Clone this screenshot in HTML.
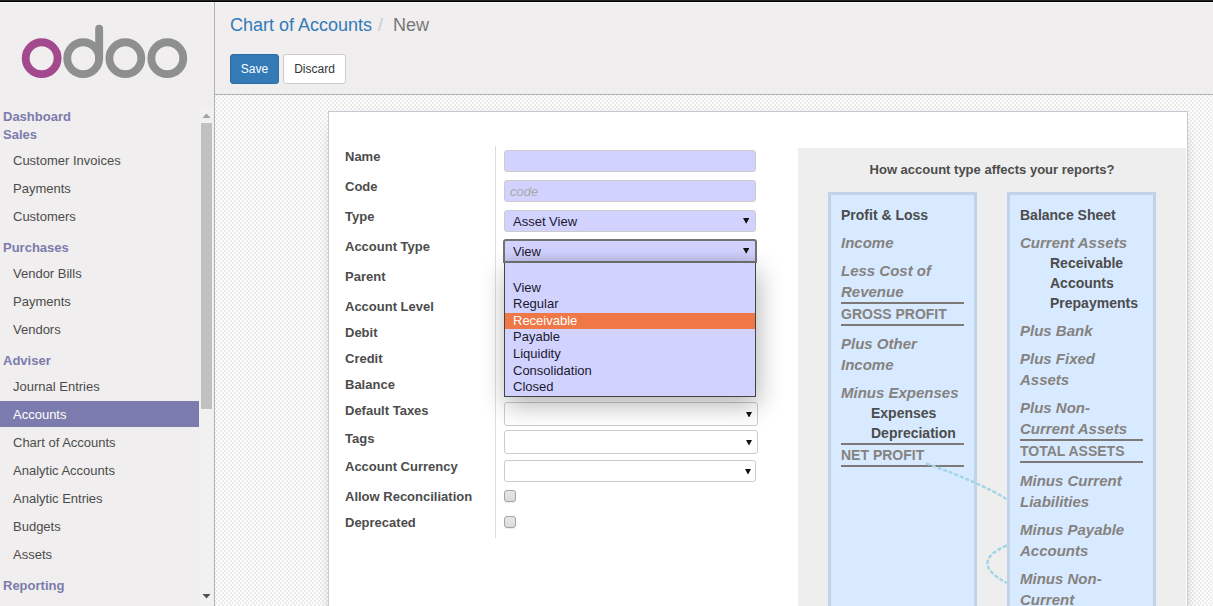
<!DOCTYPE html>
<html><head><meta charset="utf-8"><title>Chart of Accounts - New</title>
<style>
html,body{margin:0;padding:0}
body{width:1213px;height:606px;overflow:hidden;position:relative;background:#f0eeee;font-family:"Liberation Sans",sans-serif;font-size:13px;color:#4c4c4c}
.abs{position:absolute}
#topbar{left:0;top:0;width:1213px;height:2px;background:linear-gradient(#222 50%,#000 50%)}
#side{left:0;top:2px;width:214px;height:604px;background:#f0eeee;border-right:1px solid #afafb6}
.sh{position:absolute;left:3px;font-weight:bold;color:#7c7bad;line-height:18px;height:18px;white-space:nowrap}
.si{position:absolute;left:0;width:186px;padding-left:13px;padding-top:1px;line-height:26px;height:25px;overflow:hidden;white-space:nowrap;color:#4c4c4c}
.si.act{background:#7c7bad;color:#fff}
#cp{left:215px;top:2px;width:998px;height:92px;background:#f0eeee;border-bottom:1px solid #afafb6}
#content{left:215px;top:95px;width:998px;height:511px;background-color:#fff;background-image:conic-gradient(#fff 25%,#ececec 0 50%,#fff 0 75%,#ececec 0);background-size:4px 4px;background-position:3px 1px}
#sheet{left:328px;top:111px;width:858px;height:520px;background:#fff;border:1px solid #c8c8d3;box-shadow:0 5px 20px -15px #000}
.lbl{position:absolute;left:345px;font-weight:bold;line-height:18px;height:18px;white-space:nowrap;color:#4c4c4c}
.fld{position:absolute;box-sizing:border-box;border:1px solid #ccc;border-radius:3px;background:#d2d2ff}
.fld.w{background:#fff}
.arr{position:absolute;font-size:10px;line-height:10px;color:#111}
.ftxt{position:absolute;left:8px;top:0;line-height:21px;color:#1a1a2e;white-space:nowrap}
.cb{position:absolute;box-sizing:border-box;width:12px;height:12px;border:1px solid #a4a4a4;border-radius:3px;background:linear-gradient(#e6e6e6,#dbdbdb);box-shadow:0 1px 1px rgba(0,0,0,0.08)}
#dd{left:504px;top:263px;width:252px;height:134px;box-sizing:border-box;border:1px solid #444;border-top:none;background:#d2d2ff;box-shadow:2px 8px 24px rgba(0,0,0,0.3)}
.opt{height:16.5px;line-height:16.5px;padding-left:8px;color:#1a1a2e;white-space:nowrap}
.opt.hl{background:#f07746;color:#fff}
#help{left:798px;top:148px;width:388px;height:470px;background:#eee}
.box{position:absolute;top:44px;width:143px;height:500px;border:3px solid #c1d3e6;background:#d8eaff}
.bt{position:absolute;left:10px;white-space:nowrap}
.t1{font-size:14px;font-weight:bold;color:#4c4c4c;line-height:20px}
.t2{font-size:15px;font-weight:bold;font-style:italic;color:#858280;line-height:21px}
.t3{font-size:14px;font-weight:bold;color:#858280;line-height:20px}
.t4{font-size:14px;font-weight:bold;color:#4c4c4c;line-height:20px;left:40px}
.ln{position:absolute;left:10px;width:123px;height:2px;background:#7c7976}
</style></head><body>

<div class="abs" id="topbar"></div>
<div class="abs" id="side">
<svg class="abs" style="left:0;top:0" width="214" height="106" viewBox="0 2 214 106">
<g fill="none" stroke-width="7.9">
<circle cx="41.65" cy="58.2" r="15.95" stroke="#a3498d"/>
<circle cx="83.2" cy="58.2" r="15.95" stroke="#8e908f"/>
<circle cx="125.35" cy="58.2" r="15.95" stroke="#8e908f"/>
<circle cx="167.3" cy="58.2" r="15.95" stroke="#8e908f"/>
<path d="M99.15 58.2V28.75" stroke="#8e908f" stroke-linecap="round"/>
</g></svg>
<div class="sh" style="top:106px">Dashboard</div>
<div class="sh" style="top:124px">Sales</div>
<div class="sh" style="top:237px">Purchases</div>
<div class="sh" style="top:350px">Adviser</div>
<div class="sh" style="top:575px">Reporting</div>
<div class="si" style="top:145px">Customer Invoices</div>
<div class="si" style="top:173px">Payments</div>
<div class="si" style="top:201px">Customers</div>
<div class="si" style="top:258px">Vendor Bills</div>
<div class="si" style="top:286px">Payments</div>
<div class="si" style="top:314px">Vendors</div>
<div class="si" style="top:371px">Journal Entries</div>
<div class="si act" style="top:399px">Accounts</div>
<div class="si" style="top:427px">Chart of Accounts</div>
<div class="si" style="top:455px">Analytic Accounts</div>
<div class="si" style="top:483px">Analytic Entries</div>
<div class="si" style="top:511px">Budgets</div>
<div class="si" style="top:539px">Assets</div>
<div class="abs" style="left:199px;top:106px;width:15px;height:498px;background:#f1f1f1"></div>
<div class="abs" style="left:201px;top:121px;width:11px;height:286px;background:#c1c1c1"></div>
<svg class="abs" style="left:199px;top:106px" width="15" height="15"><path d="M3.5 10 L7.5 5.5 L11.5 10Z" fill="#a3a3a3"/></svg>
<svg class="abs" style="left:199px;top:587px" width="15" height="15"><path d="M3.5 5 L7.5 9.5 L11.5 5Z" fill="#505050"/></svg>
</div>
<div class="abs" id="cp">
<div class="abs" style="left:15px;top:11px;font-size:18px;line-height:24px;white-space:nowrap"><span style="color:#337ab7">Chart of Accounts</span><span style="color:#ccc;padding:0 5px 0 6px">/</span><span style="color:#777;padding-left:5px">New</span></div>
<div class="abs" style="left:15px;top:52px;width:49px;height:30px;box-sizing:border-box;border:1px solid #2e6da4;border-radius:3px;background:#337ab7;color:#fff;font-size:12px;line-height:28px;text-align:center">Save</div>
<div class="abs" style="left:68px;top:52px;width:63px;height:30px;box-sizing:border-box;border:1px solid #ccc;border-radius:3px;background:#fff;color:#333;font-size:12px;line-height:28px;text-align:center">Discard</div>
</div>
<div class="abs" style="left:0;top:2px;width:214px;height:1px;background:#fbfafa"></div><div class="abs" style="left:215px;top:2px;width:998px;height:1px;background:#fbfafa"></div>
<div class="abs" id="content"></div>
<div class="abs" id="sheet"></div>
<div class="abs" style="left:495px;top:146px;width:1px;height:392px;background:#ddd"></div>
<div class="lbl" style="top:147.5px">Name</div>
<div class="lbl" style="top:177.5px">Code</div>
<div class="lbl" style="top:207.5px">Type</div>
<div class="lbl" style="top:237.5px">Account Type</div>
<div class="lbl" style="top:267.5px">Parent</div>
<div class="lbl" style="top:297.5px">Account Level</div>
<div class="lbl" style="top:323.5px">Debit</div>
<div class="lbl" style="top:349.5px">Credit</div>
<div class="lbl" style="top:375.5px">Balance</div>
<div class="lbl" style="top:401.5px">Default Taxes</div>
<div class="lbl" style="top:429.5px">Tags</div>
<div class="lbl" style="top:457.5px">Account Currency</div>
<div class="lbl" style="top:487.5px">Allow Reconciliation</div>
<div class="lbl" style="top:513.5px">Deprecated</div>
<div class="fld" style="left:504px;top:150px;width:252px;height:22px"></div>
<div class="fld" style="left:504px;top:180px;width:252px;height:22px"><span class="ftxt" style="left:5px;font-style:italic;color:#aaa">code</span></div>
<div class="fld" style="left:504px;top:210px;width:252px;height:22px"><span class="ftxt">Asset View</span></div>
<div class="fld" style="left:503px;top:239px;width:254px;height:24px;border:2px solid #737373;border-radius:3px 3px 0 0;background:linear-gradient(#d2d2ff 55%,#c3c3ee)"><span class="ftxt" style="left:8px;top:1px;line-height:20px">View</span></div>
<div class="fld w" style="left:504px;top:402px;width:254px;height:24px"></div>
<div class="fld w" style="left:504px;top:430px;width:254px;height:24px"></div>
<div class="fld w" style="left:504px;top:460px;width:252px;height:22px"></div>
<svg class="abs" style="left:742.8px;top:218.2px" width="6.4" height="5.7" viewBox="0 0 6.4 5.7"><path d="M0 0H6.4L3.2 5.7Z" fill="#111"/></svg>
<svg class="abs" style="left:742.8px;top:247.9px" width="6.4" height="5.7" viewBox="0 0 6.4 5.7"><path d="M0 0H6.4L3.2 5.7Z" fill="#111"/></svg>
<svg class="abs" style="left:746px;top:411.7px" width="6" height="5.6" viewBox="0 0 6 5.6"><path d="M0 0H6L3.0 5.6Z" fill="#111"/></svg>
<svg class="abs" style="left:746px;top:440px" width="6" height="5.6" viewBox="0 0 6 5.6"><path d="M0 0H6L3.0 5.6Z" fill="#111"/></svg>
<svg class="abs" style="left:745px;top:468.6px" width="6" height="5.6" viewBox="0 0 6 5.6"><path d="M0 0H6L3.0 5.6Z" fill="#111"/></svg>
<div class="cb" style="left:504px;top:490px"></div>
<div class="cb" style="left:504px;top:516px"></div>
<div class="abs" id="help">
<div class="abs" style="left:0;top:13px;width:388px;text-align:center;font-weight:bold;line-height:18px;color:#4c4c4c">How account type affects your reports?</div>
<div class="box" style="left:30px">
<div class="bt t1" style="top:10px">Profit &amp; Loss</div>
<div class="bt t2" style="top:37px">Income</div>
<div class="bt t2" style="top:65px">Less Cost of</div>
<div class="bt t2" style="top:86px">Revenue</div>
<div class="ln" style="top:107px"></div>
<div class="bt t3" style="top:109px">GROSS PROFIT</div>
<div class="ln" style="top:129px"></div>
<div class="bt t2" style="top:138px">Plus Other</div>
<div class="bt t2" style="top:159px">Income</div>
<div class="bt t2" style="top:187px">Minus Expenses</div>
<div class="bt t4" style="top:208px">Expenses</div>
<div class="bt t4" style="top:228px">Depreciation</div>
<div class="ln" style="top:248px"></div>
<div class="bt t3" style="top:250px">NET PROFIT</div>
<div class="ln" style="top:270px"></div>
</div>
<div class="box" style="left:209px">
<div class="bt t1" style="top:10px">Balance Sheet</div>
<div class="bt t2" style="top:37px">Current Assets</div>
<div class="bt t4" style="top:58px">Receivable</div>
<div class="bt t4" style="top:78px">Accounts</div>
<div class="bt t4" style="top:98px">Prepayments</div>
<div class="bt t2" style="top:125px">Plus Bank</div>
<div class="bt t2" style="top:153px">Plus Fixed</div>
<div class="bt t2" style="top:174px">Assets</div>
<div class="bt t2" style="top:202px">Plus Non-</div>
<div class="bt t2" style="top:223px">Current Assets</div>
<div class="ln" style="top:244px"></div>
<div class="bt t3" style="top:246px">TOTAL ASSETS</div>
<div class="ln" style="top:266px"></div>
<div class="bt t2" style="top:275px">Minus Current</div>
<div class="bt t2" style="top:296px">Liabilities</div>
<div class="bt t2" style="top:324px">Minus Payable</div>
<div class="bt t2" style="top:345px">Accounts</div>
<div class="bt t2" style="top:373px">Minus Non-</div>
<div class="bt t2" style="top:394px">Current</div>
</div>
<svg class="abs" style="left:0;top:0" width="389" height="458" viewBox="798 148 389 458"><g fill="none" stroke="#a3d5e6" stroke-width="2.4" stroke-dasharray="4.2 1.8">
<path d="M925.8 463.3 Q 981 483 1006.8 499.2"/>
<path d="M1006.8 545.4 Q 968 562.5 1006.8 583"/></g></svg>
</div>
<div class="abs" id="dd">
<div class="opt">&nbsp;</div>
<div class="opt">View</div>
<div class="opt">Regular</div>
<div class="opt hl">Receivable</div>
<div class="opt">Payable</div>
<div class="opt">Liquidity</div>
<div class="opt" style="position:relative;top:1px">Consolidation</div>
<div class="opt">Closed</div>
</div>
</body></html>
